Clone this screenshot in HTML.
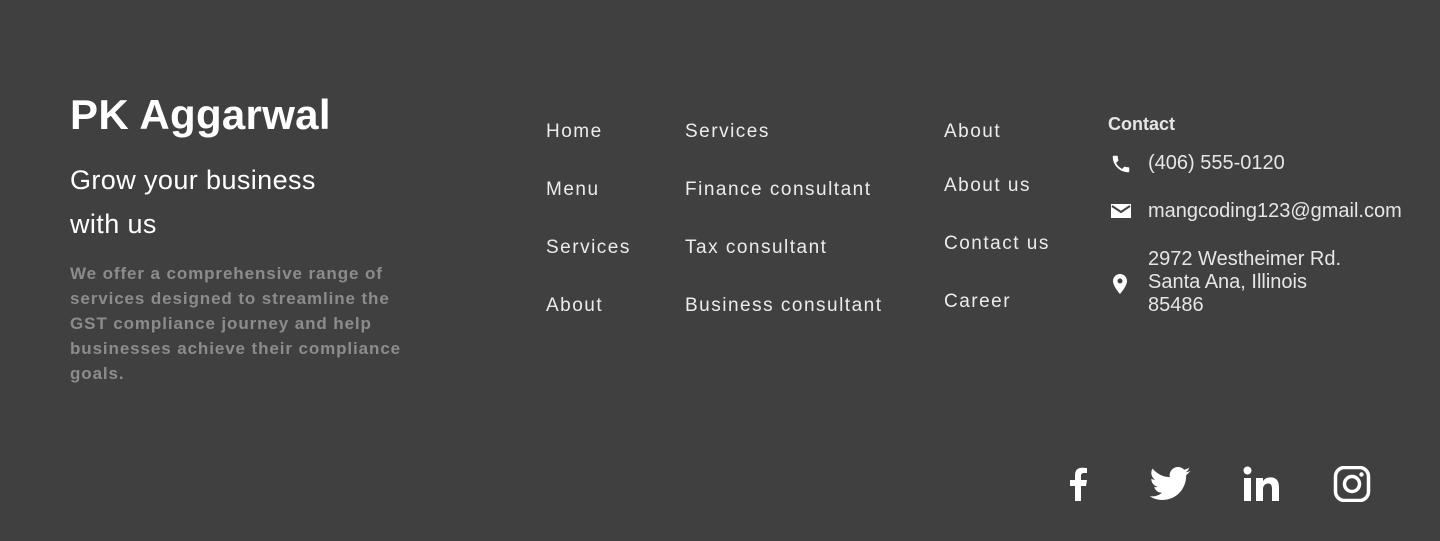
<!DOCTYPE html>
<html><head><meta charset="utf-8"><style>
*{margin:0;padding:0;box-sizing:border-box}
body{width:1440px;height:541px;background:#404040;font-family:"Liberation Sans",sans-serif;position:relative;overflow:hidden;color:#fff}
.a{position:absolute;white-space:nowrap}
h1{position:absolute;left:70px;top:90px;font-size:42px;font-weight:bold;letter-spacing:0.3px;line-height:50px}
.sub{left:70px;top:158px;font-size:27px;line-height:44px;letter-spacing:0.4px;white-space:normal;width:290px}
.desc{left:70px;top:261px;font-size:17px;line-height:25px;color:#8c8c8c;letter-spacing:0.9px;white-space:normal;width:345px;font-weight:bold}
.n{font-size:19px;color:#ececec;letter-spacing:1.5px;line-height:24px}
.c{font-size:20px;color:#e6e6e6;line-height:23px}
</style></head><body>
<h1>PK Aggarwal</h1>
<div class="a sub">Grow your business with us</div>
<div class="a desc">We offer a comprehensive range of services designed to streamline the GST compliance journey and help businesses achieve their compliance goals.</div>

<div class="a n" style="left:546px;top:120px">Home</div>
<div class="a n" style="left:546px;top:178px">Menu</div>
<div class="a n" style="left:546px;top:236px">Services</div>
<div class="a n" style="left:546px;top:294px">About</div>

<div class="a n" style="left:685px;top:120px">Services</div>
<div class="a n" style="left:685px;top:178px">Finance consultant</div>
<div class="a n" style="left:685px;top:236px">Tax consultant</div>
<div class="a n" style="left:685px;top:294px">Business consultant</div>

<div class="a n" style="left:944px;top:120px">About</div>
<div class="a n" style="left:944px;top:174px">About us</div>
<div class="a n" style="left:944px;top:232px">Contact us</div>
<div class="a n" style="left:944px;top:290px">Career</div>

<div class="a" style="left:1108px;top:114px;font-size:18px;font-weight:bold;color:#e6e6e6">Contact</div>
<svg class="a" style="left:1110px;top:153px" width="22" height="22" viewBox="0 0 24 24"><path fill="#fff" d="M6.6 10.8c1.4 2.8 3.8 5.1 6.6 6.6l2.2-2.2c.3-.3.7-.4 1-.2 1.1.4 2.3.6 3.6.6.6 0 1 .4 1 1V20c0 .6-.4 1-1 1C10.6 21 3 13.4 3 4c0-.6.4-1 1-1h3.5c.6 0 1 .4 1 1 0 1.3.2 2.5.6 3.6.1.3 0 .7-.2 1L6.6 10.8z"/></svg>
<div class="a c" style="left:1148px;top:152px">(406) 555-0120</div>
<svg class="a" style="left:1110px;top:202px" width="22" height="18" viewBox="0 0 22 18"><path fill="#fff" d="M1 2h20v14H1z"/><path fill="none" stroke="#404040" stroke-width="2" d="M2 4l9 6 9-6"/></svg>
<div class="a c" style="left:1148px;top:200px">mangcoding123@gmail.com</div>
<svg class="a" style="left:1113px;top:274px" width="14" height="20" viewBox="0 0 14 20"><path fill="#fff" d="M7 0C3.1 0 0 3.1 0 7c0 5.2 7 13 7 13s7-7.8 7-13c0-3.9-3.1-7-7-7zm0 9.5A2.5 2.5 0 1 1 7 4.5a2.5 2.5 0 0 1 0 5z"/></svg>
<div class="a c" style="left:1148px;top:248px;white-space:normal;width:220px">2972 Westheimer Rd.<br>Santa Ana, Illinois<br>85486</div>

<svg class="a" style="left:1068px;top:467px" width="20" height="34" viewBox="0 0 20 34"><path fill="#fff" d="M13 34V19h5l1-6h-6V9c0-1.7.6-3 3-3h3V1c-1 0-3-.3-5-.3-4.5 0-7 2.6-7 7.5V13H2v6h5v15z"/></svg>
<svg class="a" style="left:1149px;top:467px" width="42" height="34" viewBox="0 0 24 20"><path fill="#fff" d="M24 2.3c-.9.4-1.8.7-2.8.8 1-.6 1.8-1.600 2.2-2.700-1 .6-2 1-3.1 1.2A4.9 4.9 0 0 0 11.9 6 14 14 0 0 1 1.7.9a4.9 4.9 0 0 0 1.5 6.6c-.8 0-1.6-.3-2.2-.6 0 2.4 1.7 4.4 3.9 4.8-.7.2-1.5.2-2.2.1.6 2 2.4 3.4 4.6 3.4A9.9 9.9 0 0 1 0 17.2 14 14 0 0 0 7.5 19.4c9.1 0 14-7.5 14-14v-.6c1-.7 1.8-1.6 2.5-2.5z"/></svg>
<svg class="a" style="left:1243px;top:466px" width="38" height="36" viewBox="0 0 38 36"><circle cx="4.5" cy="4.5" r="4" fill="#fff"/><rect x="1" y="12" width="7" height="23" fill="#fff"/><path fill="#fff" d="M13 12h7v3.2c1.2-2 3.5-3.8 7.3-3.8 6.6 0 8.7 4 8.7 10V35h-7V23c0-3-.6-5.5-3.8-5.5S20 20 20 23v12h-7z"/></svg>
<svg class="a" style="left:1333px;top:466px" width="38" height="36" viewBox="0 0 38 36"><rect x="2.5" y="1.5" width="33" height="33" rx="9" fill="none" stroke="#fff" stroke-width="3.5"/><circle cx="19" cy="18" r="7.5" fill="none" stroke="#fff" stroke-width="3.5"/><circle cx="28.5" cy="8.5" r="2.2" fill="#fff"/></svg>
</body></html>
